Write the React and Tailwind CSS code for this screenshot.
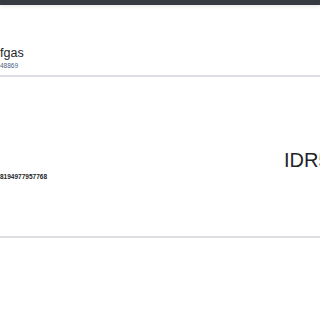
export default function App() {
  return (
    <div className="w-[320px] h-[320px] overflow-hidden bg-white" style={{ fontFamily: '"Liberation Sans", Arial, sans-serif' }}>
      <div className="relative h-[5px] bg-[#343a40] shadow-[0_1px_4px_rgba(0,0,0,0.12)]" />
      <div className="h-[72px] border-b-2 border-[#dedee3] flex flex-col pt-[41px]">
        <div className="text-[12.5px] leading-[14px] text-[#212529]">fgas</div>
        <div className="text-[6.5px] leading-[8px] text-[#4a6285] mt-[2px]">48869</div>
      </div>
      <div className="h-[161px] border-b-2 border-[#dedee3] flex items-start justify-between">
        <div className="pt-[96px] text-[6.5px] leading-[8px] font-bold text-[#212529]">8194977957768</div>
        <div className="w-[36px] shrink-0 pt-[72px] text-[20px] leading-[23px] text-[#212529] whitespace-nowrap">IDR5</div>
      </div>
    </div>
  );
}
